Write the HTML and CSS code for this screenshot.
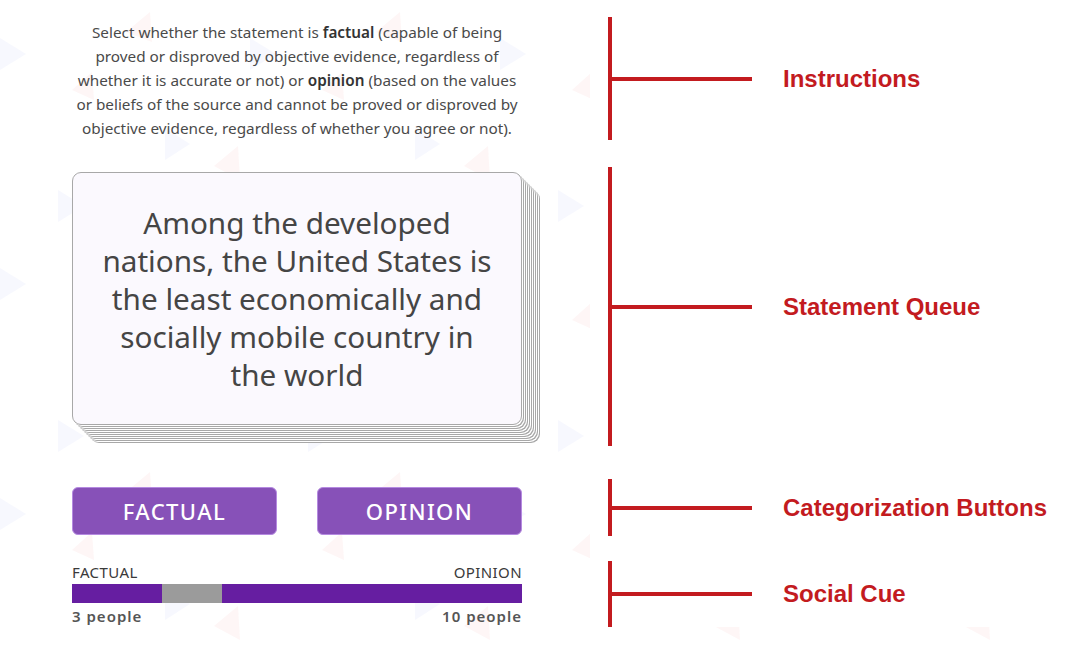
FILE: index.html
```html
<!DOCTYPE html>
<html lang="en">
<head>
    <meta charset="UTF-8">
    <meta name="viewport" content="width=device-width, initial-scale=1.0">
    <title>Fact or Opinion</title>
    <link rel="stylesheet" href="styles.css">
</head>
<body>

    <main class="layout">

        <!-- Instructions -->
        <section class="row row-instructions">
            <div class="panel">
                <p class="instructions">
                    Select whether the statement is <b>factual</b> (capable of being proved or disproved by objective evidence, regardless of whether it is accurate or not) or <b>opinion</b> (based on the values or beliefs of the source and cannot be proved or disproved by objective evidence, regardless of whether you agree or not).
                </p>
            </div>
            <div class="note">
                <span class="note-line"></span>
                <span class="note-label">Instructions</span>
            </div>
        </section>

        <!-- Statement queue -->
        <section class="row row-queue">
            <div class="panel">
                <div class="card">
                    <p class="statement">Among the developed nations, the United States is the least economically and socially mobile country in the world</p>
                </div>
            </div>
            <div class="note">
                <span class="note-line"></span>
                <span class="note-label">Statement Queue</span>
            </div>
        </section>

        <!-- Buttons -->
        <section class="row row-buttons">
            <div class="panel">
                <div class="choices">
                    <button class="choice">FACTUAL</button>
                    <button class="choice">OPINION</button>
                </div>
            </div>
            <div class="note">
                <span class="note-line"></span>
                <span class="note-label">Categorization Buttons</span>
            </div>
        </section>

        <!-- Social cue -->
        <section class="row row-social">
            <div class="panel">
                <div class="cue-labels">
                    <span>FACTUAL</span>
                    <span>OPINION</span>
                </div>
                <div class="cue-bar">
                    <span class="cue-seg" style="width: 90px"></span>
                    <span class="cue-seg cue-gap" style="width: 60px"></span>
                    <span class="cue-seg cue-rest"></span>
                </div>
                <div class="cue-counts">
                    <span>3 people</span>
                    <span>10 people</span>
                </div>
            </div>
            <div class="note">
                <span class="note-line"></span>
                <span class="note-label">Social Cue</span>
            </div>
        </section>

    </main>

</body>
</html>
```

FILE: styles.css
```css
body {
    margin: 0;
    padding: 17px 0 0 0;
    font-family: "Noto Sans", sans-serif;
    color: #444;
    background-color: #fff;
    background-image:
        linear-gradient(to right, transparent 590px, #fff 590px),
        url("data:image/svg+xml;utf8,<svg xmlns='http://www.w3.org/2000/svg' width='250' height='230'><g fill-opacity='0.045'><polygon fill='%233a5bd9' points='0,38 26,54 0,70'/><polygon fill='%23e02828' points='92,72 72,90 94,100'/><polygon fill='%233a5bd9' points='165,128 190,144 165,160'/><polygon fill='%23e02828' points='238,146 214,166 240,180'/><polygon fill='%233a5bd9' points='58,190 84,206 58,222'/><polygon fill='%23e02828' points='150,12 126,32 152,42'/></g></svg>");
    background-repeat: no-repeat, repeat;
}

.row {
    display: grid;
    grid-template-columns: 608px auto;
}

.row-instructions {
    height: 122px;
}

.row-queue {
    margin-top: 28px;
    height: 279px;
}

.row-buttons {
    margin-top: 33px;
    height: 57px;
}

.row-social {
    margin-top: 25px;
    height: 66px;
}

.panel {
    padding-left: 72px;
}

/* Instructions */
.instructions {
    width: 446px;
    margin: 0;
    padding: 3px 2px 0 2px;
    font-size: 15.3px;
    line-height: 24px;
    text-align: center;
    color: #4a4a4a;
}

.instructions b {
    font-weight: 600;
    color: #333;
}

/* Statement card with a stack behind it */
.card {
    box-sizing: border-box;
    width: 450px;
    height: 253px;
    margin-top: 5px;
    padding: 0 22px;
    display: flex;
    align-items: center;
    justify-content: center;
    background-color: #fbf9fe;
    border: 1px solid #a8a8a8;
    border-radius: 9px;
    box-shadow:
        1px 1px 0 #fff, 2px 2px 0 #a8a8a8,
        3px 3px 0 #fff, 4px 4px 0 #a8a8a8,
        5px 5px 0 #fff, 6px 6px 0 #a8a8a8,
        7px 7px 0 #fff, 8px 8px 0 #a8a8a8,
        9px 9px 0 #fff, 10px 10px 0 #a8a8a8,
        11px 11px 0 #fff, 12px 12px 0 #a8a8a8,
        13px 13px 0 #fff, 14px 14px 0 #a8a8a8,
        15px 15px 0 #fff, 16px 16px 0 #a8a8a8,
        17px 17px 0 #fff, 18px 18px 0 #a8a8a8;
}

.statement {
    margin: 0;
    font-size: 29.7px;
    line-height: 38px;
    text-align: center;
    color: #454545;
}

/* Buttons */
.choices {
    width: 450px;
    padding-top: 8px;
    display: flex;
    justify-content: space-between;
}

.choice {
    width: 205px;
    height: 48px;
    border: 1px solid #b58ae0;
    border-radius: 6px;
    background-color: #8751b8;
    color: #fff;
    font-family: "Noto Sans", sans-serif;
    font-size: 22px;
    font-weight: 500;
    letter-spacing: 1.4px;
    cursor: pointer;
}

/* Social cue */
.cue-labels, .cue-counts {
    width: 450px;
    display: flex;
    justify-content: space-between;
}

.cue-labels {
    padding-top: 2px;
    font-size: 15px;
    line-height: 18px;
    letter-spacing: 0.4px;
    color: #3a3a3a;
}

.cue-bar {
    width: 450px;
    height: 19px;
    margin-top: 3px;
    display: flex;
}

.cue-seg {
    background-color: #661ea1;
}

.cue-gap {
    background-color: #9b9b9b;
}

.cue-rest {
    flex: 1;
}

.cue-counts {
    margin-top: 4px;
    font-size: 15px;
    line-height: 18px;
    font-weight: 600;
    letter-spacing: 1px;
    color: #555;
}

/* Annotations on the right */
.note {
    border-left: 4px solid #c31b1f;
    display: flex;
    align-items: center;
}

.note-line {
    width: 140px;
    height: 4px;
    background-color: #c31b1f;
}

.note-label {
    margin-left: 31px;
    font-family: "Liberation Sans", Arial, sans-serif;
    font-weight: bold;
    font-size: 24px;
    color: #c31b1f;
}
```
